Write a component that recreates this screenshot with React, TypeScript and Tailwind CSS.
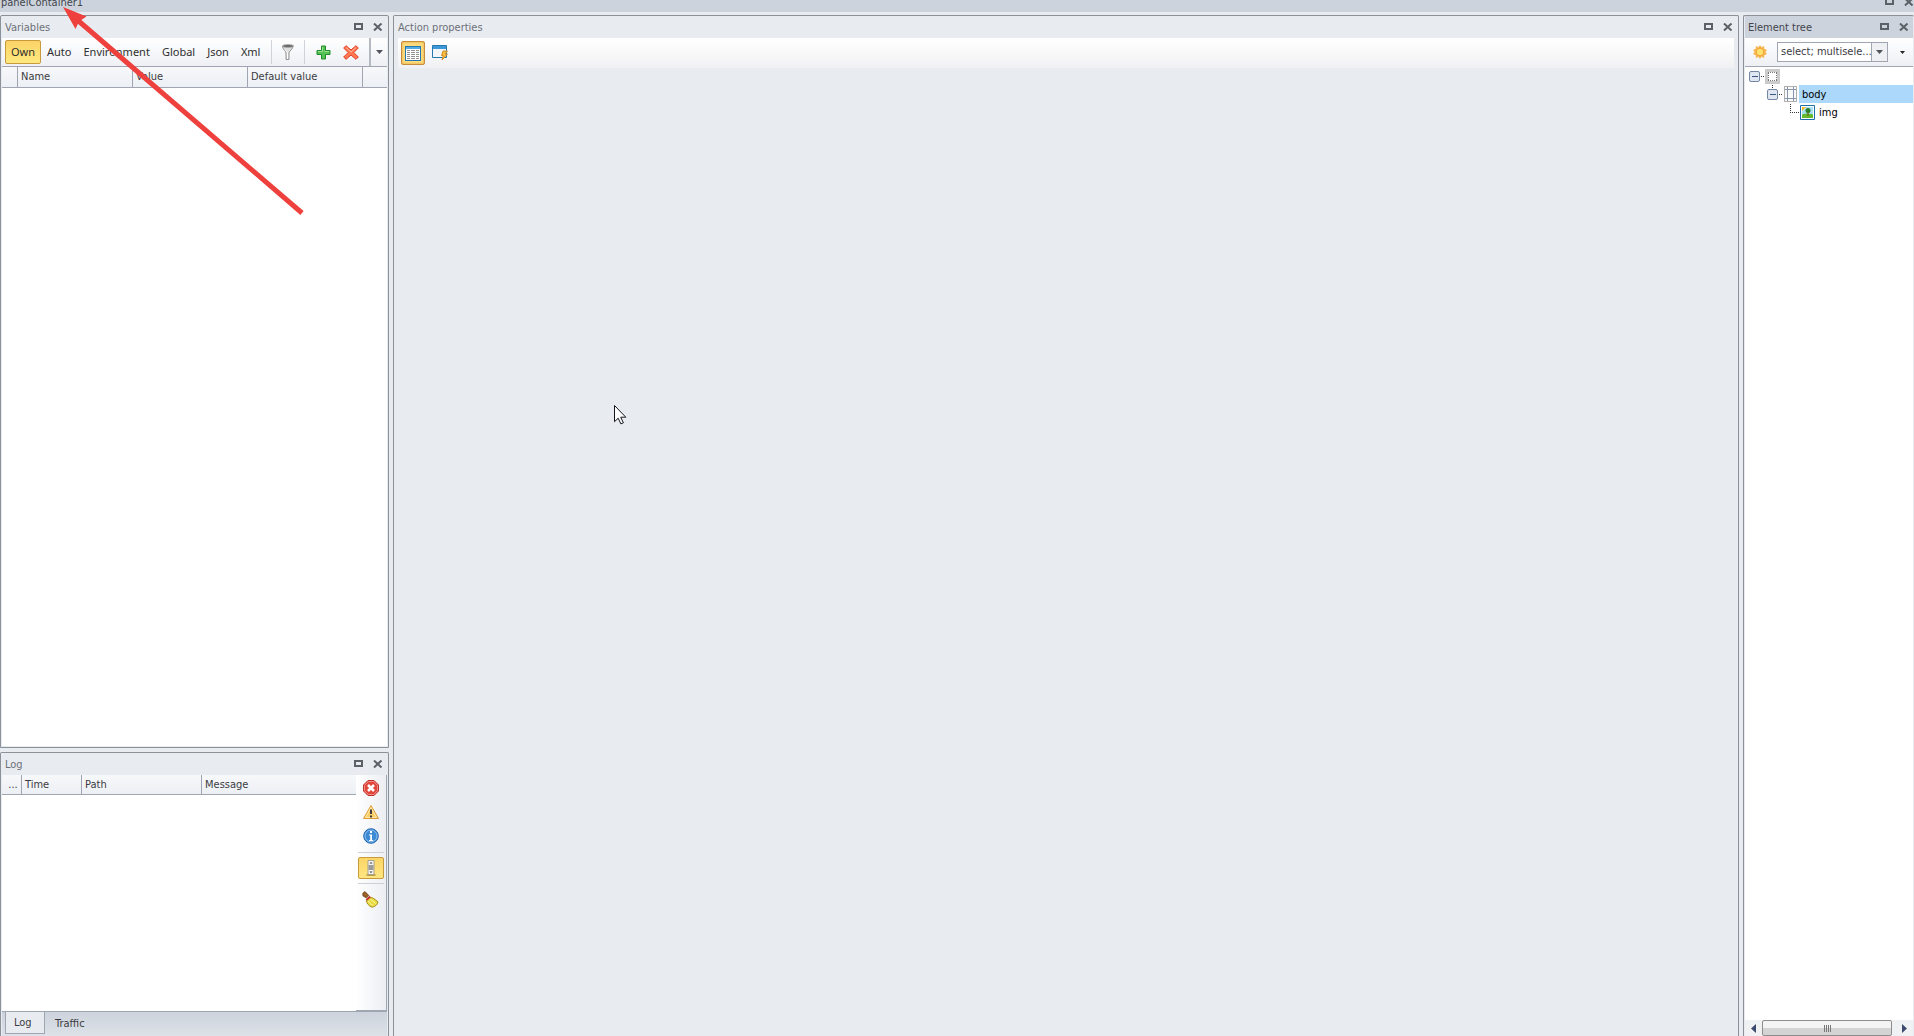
import type { ReactNode } from 'react';

const UI_FONT = "font-['DejaVu_Sans_Condensed','Liberation_Sans',sans-serif]";
const MENU_FONT = "font-['Noto_Sans','Open_Sans',sans-serif]";

function WindowButtons({ name }: { name: string }) {
  return (
    <div className="flex gap-[7px]">
      <button type="button" aria-label={`Maximize ${name}`} className="flex h-3 w-3 items-center justify-center">
        <svg width="10" height="8" viewBox="0 0 10 8" shapeRendering="crispEdges">
          <path d="M0 0h9v7H0zM2 2v3h5V2z" fill="#5c6067" fillRule="evenodd" />
        </svg>
      </button>
      <button type="button" aria-label={`Close ${name}`} className="flex h-3 w-3 items-center justify-center">
        <svg width="10" height="8" viewBox="0 0 10 8">
          <path d="M1 0.5L8.5 7.5M8.5 0.5L1 7.5" stroke="#5c6067" strokeWidth="2" />
        </svg>
      </button>
    </div>
  );
}

interface PanelProps {
  title: string;
  active?: boolean;
  className?: string;
  children: ReactNode;
}

function Panel({ title, active, className, children }: PanelProps) {
  return (
    <section
      aria-label={title}
      className={`flex min-h-0 flex-col rounded-t-xs border border-[#8b9199] bg-[#e8ecf1] px-px ${className ?? ''}`}
    >
      <header
        className={`flex h-[22px] shrink-0 items-center justify-between pr-[3px] pl-[3px] ${
          active ? 'bg-[#ccd3dc] text-[#43454d]' : 'text-[#6d7078]'
        }`}
      >
        <h2 className="pt-0.5">{title}</h2>
        <WindowButtons name={title} />
      </header>
      {children}
    </section>
  );
}

function Caret() {
  return (
    <svg width="7" height="4" viewBox="0 0 7 4">
      <path d="M0 0h7L3.500 4z" fill="#4f545c" />
    </svg>
  );
}

function Separator() {
  return <span className="mx-1 h-6 w-px bg-[#cfd2d8]" />;
}

const SCOPES = ['Own', 'Auto', 'Environment', 'Global', 'Json', 'Xml'];

function VariablesToolbar() {
  return (
    <div className={`flex h-7 shrink-0 items-center bg-linear-to-b from-white to-[#eef0f4] pl-[3px] ${MENU_FONT}`}>
      {SCOPES.map((scope) => (
        <button
          key={scope}
          type="button"
          className={`h-6 rounded-xs border px-[5px] whitespace-nowrap text-[#2f2f2f] ${
            scope === 'Own'
              ? 'border-[#c79a3c] bg-linear-to-b from-[#fbd368] to-[#ffe97f]'
              : 'border-transparent'
          }`}
        >
          {scope}
        </button>
      ))}
      <div className="ml-auto flex h-full shrink-0 items-center">
        <Separator />
        <button type="button" aria-label="Filter" className="flex w-6 justify-center">
          <svg width="14" height="17" viewBox="0 0 14 17">
            <path d="M1.500 2.500C1.500 5 5 7 5 9v6.500h3V9c0-2 4-4 4-6.500z" fill="#dedede" stroke="#949494" />
            <ellipse cx="7" cy="2" rx="5.500" ry="1.300" fill="#555" stroke="#a6a6a6" />
            <path d="M4 5.500l2.500 3V15" fill="none" stroke="#fff" />
          </svg>
        </button>
        <Separator />
        <button type="button" aria-label="Add variable" className="flex w-7 justify-center">
          <svg width="15" height="15" viewBox="0 0 15 15">
            <path d="M5.500 1h4v4.500H14v4H9.500V14h-4V9.500H1v-4h4.500z" fill="#55c154" stroke="#208c28" />
            <path d="M6.500 2v4.500H2M8.500 6.500H13" fill="none" stroke="#9be292" />
          </svg>
        </button>
        <button type="button" aria-label="Delete variable" className="flex w-7 justify-center">
          <svg width="16" height="15" viewBox="0 0 16 15">
            <path d="M3 .7L8 5l5-4.300L15.300 3l-4.500 4.500 4.500 4.500L13 14.300 8 10l-5 4.300L.7 12l4.500-4.500L.7 3z" fill="#ff7850" stroke="#df3c26" />
            <path d="M3 2.500l5 4.500 5-4.500" fill="none" stroke="#ffb49a" />
          </svg>
        </button>
        <span className="ml-1 h-full w-0.5 bg-[#b4b9c2]" />
        <button type="button" aria-label="Toolbar options" className="flex h-full w-4 items-center justify-center">
          <Caret />
        </button>
      </div>
    </div>
  );
}

interface Column {
  label: string;
  width: string;
}

const VARIABLE_COLUMNS: Column[] = [
  { label: '', width: 'w-4' },
  { label: 'Name', width: 'w-[115px]' },
  { label: 'Value', width: 'w-[115px]' },
  { label: 'Default value', width: 'w-[115px]' },
  { label: '', width: '' },
];

const LOG_COLUMNS: Column[] = [
  { label: '...', width: 'w-5 text-center' },
  { label: 'Time', width: 'w-[60px]' },
  { label: 'Path', width: 'w-[120px]' },
  { label: 'Message', width: '' },
];

function GridHeader({ columns, label, rowClass }: { columns: Column[]; label: string; rowClass: string }) {
  return (
    <table aria-label={label} className="w-full table-fixed border-separate border-spacing-0">
      <thead>
        <tr className={`bg-linear-to-b from-[#f6f8fa] to-[#eceff4] text-left text-[#3b3b3f] ${rowClass}`}>
          {columns.map((column, i) => (
            <th
              key={i}
              className={`border-r border-b border-[#a0a6b1] pl-[3px] font-normal whitespace-nowrap last:border-r-0 ${column.width}`}
            >
              {column.label}
            </th>
          ))}
        </tr>
      </thead>
    </table>
  );
}

function LogTools() {
  return (
    <div className="flex w-[31px] shrink-0 flex-col items-center border-r border-b border-[#a0a6b1] bg-linear-to-r from-white to-[#eceef2] pt-px pr-px">
      <button type="button" aria-label="Errors" className="flex h-6 items-center">
        <svg width="16" height="16" viewBox="0 0 16 16">
          <path d="M5 .5h6L15.500 5v6L11 15.500H5L.5 11V5z" fill="#e0463c" stroke="#bc302b" />
          <path d="M5.300 1.500h5.400l3.800 3.800v5.400l-3.800 3.800H5.300l-3.800-3.800V5.300z" fill="none" stroke="#f08f84" />
          <path d="M5 5l6 6M11 5l-6 6" stroke="#fff" strokeWidth="2.600" />
        </svg>
      </button>
      <button type="button" aria-label="Warnings" className="flex h-6 items-center">
        <svg width="16" height="16" viewBox="0 0 16 16">
          <path d="M8 1.500L15.500 14.500H.5z" fill="#fcd067" stroke="#dc9a38" strokeLinejoin="round" />
          <path d="M8 3.500L13.500 13.500H2.500z" fill="none" stroke="#ffe7a8" />
          <path d="M8 5.500v4.500M8 11.500v2" stroke="#3d3d3d" strokeWidth="2" />
        </svg>
      </button>
      <button type="button" aria-label="Information" className="flex h-6 items-center">
        <svg width="16" height="16" viewBox="0 0 16 16">
          <circle cx="8" cy="8" r="7.300" fill="#3d8bd4" stroke="#2466ae" />
          <circle cx="8" cy="8" r="6" fill="none" stroke="#8cc0ee" />
          <path d="M7 3h2v2H7zM6 6.500h3V12h1.200v1H6v-1h1.200V7.500H6z" fill="#fff" />
        </svg>
      </button>
      <span className="my-1 h-px w-[26px] bg-[#cdd0d6]" />
      <button
        type="button"
        aria-label="Auto scroll"
        aria-pressed="true"
        className="flex h-[22px] w-[26px] items-center justify-center rounded-xs border border-[#c79a3c] bg-linear-to-b from-[#fbd566] to-[#ffe681]"
      >
        <svg width="10" height="16" viewBox="0 0 10 16">
          <ellipse cx="5" cy="15" rx="5" ry="1" fill="#b99b48" />
          <path d="M2 .5h6v14H2z" fill="#f4f4f4" stroke="#a9a08a" />
          <path d="M2.500 5h5v5h-5z" fill="#9a9a9a" />
          <path d="M3.500 3.500L5 2l1.500 1.500zM3.500 11.500L5 13l1.500-1.500z" fill="#333" />
        </svg>
      </button>
      <span className="mt-1 mb-[3px] h-px w-[26px] bg-[#cdd0d6]" />
      <button type="button" aria-label="Clear log" className="flex h-6 items-center">
        <svg width="17" height="17" viewBox="0 0 17 17">
          <path d="M.800 2.200L3 .6 6.800 4.500 4.300 6.800 1 5z" fill="#9a6026" stroke="#654019" strokeWidth=".8" />
          <path d="M8 6.500c3.500 0 5 2 8 4.500-.5 2.500-2.500 4.500-6 5.200C7 15 4.500 12.500 4.500 9.500z" fill="#e8dc45" stroke="#a78f1c" />
          <path d="M8.500 8.500c2 1 3.500 2.500 5 4M6.500 10c1 2 2.500 3.500 4.500 4.500" fill="none" stroke="#fff9a5" />
          <path d="M4.300 9L8.200 5.500" stroke="#c3332e" strokeWidth="1.800" />
        </svg>
      </button>
    </div>
  );
}

function ActionToolbar() {
  return (
    <div className="mx-[3px] flex h-[30px] shrink-0 items-center gap-[7px] bg-linear-to-b from-white to-[#f1f1f3] pl-[3px]">
      <button
        type="button"
        aria-label="Properties"
        aria-pressed="true"
        className="flex h-6 w-6 items-center justify-center rounded-xs border border-[#c78d3c] bg-[#fddb7c] shadow-[inset_0_0_2px_#d98f2c]"
      >
        <svg width="16" height="15" viewBox="0 0 16 15" shapeRendering="crispEdges">
          <path d="M0 0h16v15H0z" fill="#2578ad" />
          <path d="M1 1h14v2H1z" fill="#55ace4" />
          <path d="M1 3h14v11H1z" fill="#fff" />
          <path d="M2 4h3v1H2zM6 4h4v1H6zM11 4h3v1h-3zM2 6h3v1H2zM6 6h4v1H6zM11 6h3v1h-3zM2 8h3v1H2zM6 8h4v1H6zM11 8h3v1h-3zM2 10h3v1H2zM6 10h4v1H6zM11 10h3v1h-3zM2 12h3v1H2zM6 12h4v1H6zM11 12h3v1h-3z" fill="#929292" />
        </svg>
      </button>
      <button type="button" aria-label="Events" className="flex items-center">
        <svg width="17" height="16" viewBox="0 0 17 16">
          <path d="M.5.500h14v12H.5z" fill="#f4f6fa" stroke="#2578ad" />
          <path d="M1 1h13v3H1z" fill="#3c98d8" />
          <path d="M11 6h4.500l-2.500 3h2.500l-5.500 6 1.200-4.500H9.500z" fill="#fac13d" stroke="#c98524" strokeWidth=".9" />
        </svg>
      </button>
    </div>
  );
}

/* Collapse box with the dotted stub that leads to the node's icon */
function Expander({ label, stem }: { label: string; stem?: boolean }) {
  return (
    <button type="button" aria-label={label} className="h-[18px] w-4">
      <svg width="16" height="18" viewBox="0 0 16 18">
        {stem && <path d="M5.500 0v4" stroke="#333" strokeDasharray="1 1" />}
        <path d="M12 9.500h4" stroke="#333" strokeDasharray="1 1" />
        <rect x=".5" y="4.500" width="10" height="10" rx="1.500" fill="#dde6f1" stroke="#7587a3" />
        <path d="M3 9.500h6" stroke="#3c5680" />
      </svg>
    </button>
  );
}

function ElementTree() {
  return (
    <ul role="tree" aria-label="Elements" className="min-h-0 grow bg-white text-black">
      <li role="treeitem" aria-expanded="true" className="flex h-[18px] items-center pl-1">
        <Expander label="Collapse document" />
        <svg width="15" height="15" viewBox="0 0 15 15" shapeRendering="crispEdges">
          <path d="M0 0h15v15H0z" fill="#cbcbcb" />
          <path d="M3 3h9v9H3z" fill="#fff" />
          <path d="M3 3h9M3 11.500h9M3.500 4v8M11.500 4v8" fill="none" stroke="#777" strokeDasharray="1 1" />
        </svg>
      </li>
      <li role="treeitem" aria-expanded="true" aria-selected="true" className="flex h-[18px] items-center pl-[22px]">
        <Expander label="Collapse body" stem />
        <svg width="15" height="16" viewBox="0 0 15 16" className="ml-px" shapeRendering="crispEdges">
          <path d="M.5.500h12v15H.500z" fill="#fafafa" stroke="#b0b0b0" />
          <path d="M3.500 1v14M9.500 1v14M1 3.500h11M1 12.500h11" stroke="#8795ad" />
        </svg>
        <span className="flex h-full grow items-center bg-[#acd8fc] pt-0.5 pl-[3px]">body</span>
      </li>
      <li role="treeitem" className="flex h-[18px] items-center pl-[45px]">
        <svg width="10" height="18" viewBox="0 0 10 18">
          <path d="M.5 1v9M0 9.500h9" fill="none" stroke="#333" strokeDasharray="1 1" />
        </svg>
        <svg width="15" height="15" viewBox="0 0 15 15">
          <path d="M.5.500h14v14H.5z" fill="#fff" stroke="#1e6ea8" />
          <path d="M2 2h11v8H2z" fill="#a9e0f5" />
          <path d="M2 2h4L2 6z" fill="#f9bd22" />
          <path d="M2 9.500c3-1.500 7-1.500 11 0V13H2z" fill="#64ba2d" />
          <path d="M8 6v5" stroke="#6d4a1d" />
          <circle cx="8" cy="5.500" r="2.500" fill="#2d7c26" />
        </svg>
        <span className="pt-0.5 pl-1">img</span>
      </li>
    </ul>
  );
}

function HorizontalScroll() {
  return (
    <div className="flex h-4 shrink-0 items-stretch bg-[#f0f1f2]">
      <button type="button" aria-label="Scroll left" className="flex w-[17px] items-center justify-center">
        <svg width="5" height="9" viewBox="0 0 5 9">
          <path d="M5 0v9L0 4.500z" fill="#3d4a70" />
        </svg>
      </button>
      <div className="mr-1 flex grow items-center justify-center gap-px rounded-xs border border-[#8d8d8d] bg-linear-to-b from-[#f4f4f4] from-50% to-[#d4d4d4] to-50%">
        {[0, 1, 2, 3].map((grip) => (
          <span key={grip} className="h-[7px] w-px bg-[#777]" />
        ))}
      </div>
      <button type="button" aria-label="Scroll right" className="flex w-[17px] items-center justify-center">
        <svg width="5" height="9" viewBox="0 0 5 9">
          <path d="M0 0v9l5-4.500z" fill="#3d4a70" />
        </svg>
      </button>
    </div>
  );
}

export default function App() {
  return (
    <div className={`relative flex h-screen flex-col overflow-hidden bg-[#e8ecf1] text-[11px] leading-[14px] ${UI_FONT}`}>
      <div className="flex h-3 shrink-0 items-start justify-between bg-[#ccd3dc] pl-px text-[#43454d]">
        <h1 className="leading-[6px]">panelContainer1</h1>
        <div className="-mt-1 -mr-px">
          <WindowButtons name="panelContainer1" />
        </div>
      </div>

      <main className="flex min-h-0 grow gap-1 pt-[3px]">
        <div className="flex w-[389px] shrink-0 flex-col gap-1">
          <Panel title="Variables" className="grow pb-px">
            <VariablesToolbar />
            <div className="grow border-t border-[#a0a6b1] bg-white">
              <GridHeader columns={VARIABLE_COLUMNS} label="Variables" rowClass="h-[21px]" />
            </div>
          </Panel>

          <Panel title="Log" className="h-[284px] shrink-0 border-b-0">
            <div className="flex min-h-0 grow bg-white">
              <div className="grow">
                <GridHeader columns={LOG_COLUMNS} label="Log entries" rowClass="h-5" />
              </div>
              <LogTools />
            </div>
            <div
              role="tablist"
              className="flex h-[25px] shrink-0 items-start border-t border-[#a0a6b1] bg-linear-to-b from-[#cdd3dc] to-[#dde2e8] pl-[3px] text-[#3b3b3f]"
            >
              <button
                type="button"
                role="tab"
                aria-selected="true"
                className="h-[22px] w-10 border border-t-0 border-[#a0a6b1] bg-[#e8ecf1] pt-px pl-2 text-left"
              >
                Log
              </button>
              <button type="button" role="tab" aria-selected="false" className="h-[22px] px-[10px] pt-px">
                Traffic
              </button>
            </div>
          </Panel>
        </div>

        <Panel title="Action properties" className="grow border-b-0">
          <ActionToolbar />
        </Panel>

        <Panel title="Element tree" active className="w-[171px] shrink-0 border-r-0 border-b-0">
          <div className="flex h-7 shrink-0 items-center bg-linear-to-b from-white to-[#eef0f4] pl-2">
            <button type="button" aria-label="Highlight element">
              <svg width="14" height="14" viewBox="0 0 14 14">
                <path
                  d="M7 0l1.400 2.300L11 1l.3 2.700L14 5l-1.600 2L14 9l-2.700 1.300L11 13l-2.600-1.300L7 14l-1.400-2.300L3 13l-.3-2.700L0 9l1.600-2L0 5l2.700-1.300L3 1l2.600 1.300z"
                  fill="#f8b64e"
                />
                <circle cx="7" cy="7" r="3.800" fill="#ffe36c" stroke="#f0a23a" />
              </svg>
            </button>
            <div className="relative ml-[10px] w-[111px]">
              <select
                aria-label="Element filter"
                className="block h-5 w-full appearance-none border border-[#a0a6b1] bg-white pl-[3px] text-[#3b3b3f]"
              >
                <option>select; multisele...</option>
              </select>
              <span className="pointer-events-none absolute inset-y-px right-px flex w-4 items-center justify-center border-l border-[#a0a6b1] bg-[#eef0f4]">
                <Caret />
              </span>
            </div>
            <button type="button" aria-label="Toolbar options" className="flex grow justify-center pl-1">
              <svg width="5" height="3" viewBox="0 0 5 3">
                <path d="M0 0h5L2.500 3z" fill="#222" />
              </svg>
            </button>
          </div>
          <div className="h-px shrink-0 bg-[#a0a6b1]" />
          <ElementTree />
          <HorizontalScroll />
        </Panel>
      </main>

      {/* Annotation arrow and mouse pointer float above the panels */}
      <svg className="pointer-events-none absolute top-0 left-0" width="320" height="230" viewBox="0 0 320 230">
        <path d="M302 213L78 20.500" stroke="#ee403c" strokeWidth="5" />
        <path d="M63 7L86.500 16.500 79 21.500 75.500 29z" fill="#ee403c" />
      </svg>
      <svg className="pointer-events-none absolute top-[405px] left-[614px]" width="13" height="20" viewBox="0 0 13 20">
        <path d="M.5.500v16.200l3.700-3.500 2.700 5.700 2.500-1.100-2.700-5.600h5.100z" fill="#fff" stroke="#15151c" />
      </svg>
    </div>
  );
}
